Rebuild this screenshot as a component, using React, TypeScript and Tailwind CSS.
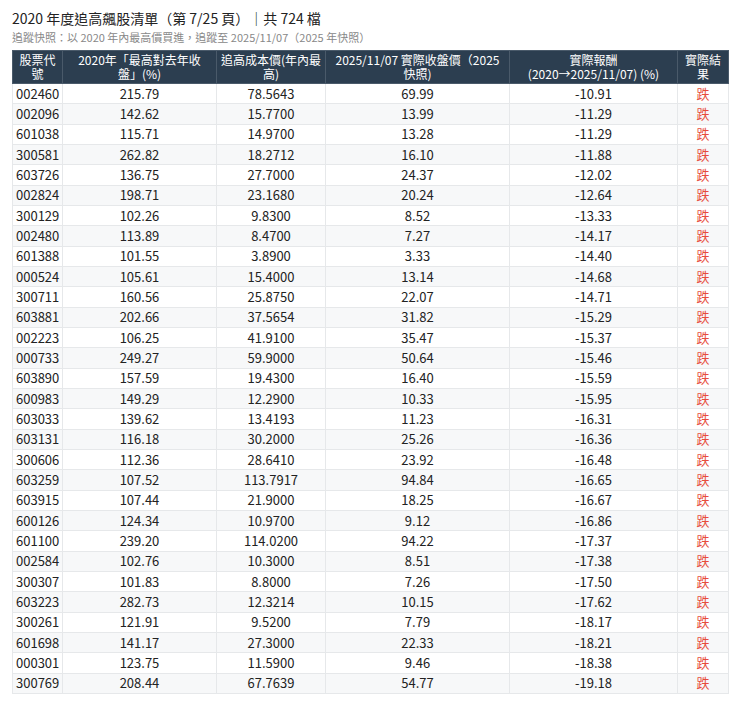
import React from "react"

const rows: [string, string, string, string, string][] = [
  ["002460", "215.79", "78.5643", "69.99", "-10.91"],
  ["002096", "142.62", "15.7700", "13.99", "-11.29"],
  ["601038", "115.71", "14.9700", "13.28", "-11.29"],
  ["300581", "262.82", "18.2712", "16.10", "-11.88"],
  ["603726", "136.75", "27.7000", "24.37", "-12.02"],
  ["002824", "198.71", "23.1680", "20.24", "-12.64"],
  ["300129", "102.26", "9.8300", "8.52", "-13.33"],
  ["002480", "113.89", "8.4700", "7.27", "-14.17"],
  ["601388", "101.55", "3.8900", "3.33", "-14.40"],
  ["000524", "105.61", "15.4000", "13.14", "-14.68"],
  ["300711", "160.56", "25.8750", "22.07", "-14.71"],
  ["603881", "202.66", "37.5654", "31.82", "-15.29"],
  ["002223", "106.25", "41.9100", "35.47", "-15.37"],
  ["000733", "249.27", "59.9000", "50.64", "-15.46"],
  ["603890", "157.59", "19.4300", "16.40", "-15.59"],
  ["600983", "149.29", "12.2900", "10.33", "-15.95"],
  ["603033", "139.62", "13.4193", "11.23", "-16.31"],
  ["603131", "116.18", "30.2000", "25.26", "-16.36"],
  ["300606", "112.36", "28.6410", "23.92", "-16.48"],
  ["603259", "107.52", "113.7917", "94.84", "-16.65"],
  ["603915", "107.44", "21.9000", "18.25", "-16.67"],
  ["600126", "124.34", "10.9700", "9.12", "-16.86"],
  ["601100", "239.20", "114.0200", "94.22", "-17.37"],
  ["002584", "102.76", "10.3000", "8.51", "-17.38"],
  ["300307", "101.83", "8.8000", "7.26", "-17.50"],
  ["603223", "282.73", "12.3214", "10.15", "-17.62"],
  ["300261", "121.91", "9.5200", "7.79", "-18.17"],
  ["601698", "141.17", "27.3000", "22.33", "-18.21"],
  ["000301", "123.75", "11.5900", "9.46", "-18.38"],
  ["300769", "208.44", "67.7639", "54.77", "-19.18"],
]

export default function App() {
  return (
    <div className="bg-white w-[740px] h-[706px] px-3 pt-[9px] font-['Noto_Sans_CJK_TC','Noto_Sans',sans-serif] text-[#222]">
      <h1 className="text-[14px] leading-[19px] text-[#222]">2020 年度追高飆股清單（第 7/25 頁）｜共 724 檔</h1>
      <p className="text-[11px] leading-[16px] text-[#888] mt-[1px]">追蹤快照：以 2020 年內最高價買進，追蹤至 2025/11/07（2025 年快照）</p>
      <table className="mt-[5px] w-[716px] border-collapse table-fixed text-[13px]">
        <colgroup>
          <col className="w-[50px]" />
          <col className="w-[154px]" />
          <col className="w-[109px]" />
          <col className="w-[184px]" />
          <col className="w-[168px]" />
          <col className="w-[51px]" />
        </colgroup>
        <thead>
          <tr className="bg-[#2c3e50] text-white text-[12px] leading-[14px] h-[33px]">
            <th className="font-normal border border-[#4a5a6a] px-[3px]">股票代號</th>
            <th className="font-normal border border-[#4a5a6a] px-[10px]">2020年「最高對去年收盤」(%)</th>
            <th className="font-normal border border-[#4a5a6a] px-[2px]">追高成本價(年內最高)</th>
            <th className="font-normal border border-[#4a5a6a] px-[6px]">2025/11/07 實際收盤價（2025快照)</th>
            <th className="font-normal border border-[#4a5a6a] px-1">{"實際報酬 (2020→2025/11/07)\u00a0(%)"}</th>
            <th className="font-normal border border-[#4a5a6a] px-1">實際結果</th>
          </tr>
        </thead>
        <tbody>
          {rows.map((r, i) => (
            <tr key={r[0]} className={`h-[20.33px] leading-[16px] ${i % 2 === 1 ? "bg-[#f7f8f9]" : "bg-white"}`}>
              <td className="border border-[#e6e8ea] pl-[3px] py-0">{r[0]}</td>
              <td className="border border-[#e6e8ea] text-center py-0">{r[1]}</td>
              <td className="border border-[#e6e8ea] text-center py-0">{r[2]}</td>
              <td className="border border-[#e6e8ea] text-center py-0">{r[3]}</td>
              <td className="border border-[#e6e8ea] text-center py-0">{r[4]}</td>
              <td className="border border-[#e6e8ea] text-center py-0 text-[#e74c3c]">跌</td>
            </tr>
          ))}
        </tbody>
      </table>
    </div>
  )
}
